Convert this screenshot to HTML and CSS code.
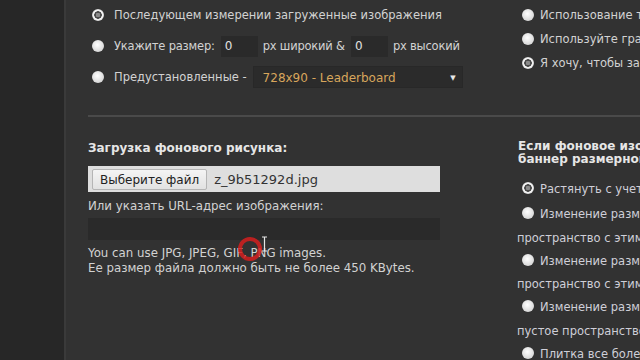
FILE: index.html
```html
<!DOCTYPE html>
<html lang="ru">
<head>
    <meta charset="UTF-8">
    <title>Фоновое изображение баннера</title>
    <link rel="stylesheet" href="styles.css">
</head>
<body>
<div class="page">
    <div class="side"></div>
    <div class="main">
        <div class="top">
            <div class="col-left">
                <div class="row"><span class="radio on"></span>Последующем измерении загруженные изображения</div>
                <div class="row"><span class="radio"></span>Укажите размер:<span class="num">0</span>px широкий &amp;<span class="num">0</span>px высокий</div>
                <div class="row"><span class="radio"></span>Предустановленные -<span class="select">728x90 - Leaderboard<span class="arrow">▼</span></span></div>
            </div>
            <div class="col-right">
                <div class="rrow"><span class="radio"></span>Использование текущего фонового изображения</div>
                <div class="rrow"><span class="radio"></span>Используйте градиентный фон</div>
                <div class="rrow"><span class="radio on"></span>Я хочу, чтобы загрузить фоновое изображение</div>
            </div>
        </div>
        <div class="sep"></div>
        <div class="bottom">
            <div class="col-left">
                <div class="title">Загрузка фонового рисунка:</div>
                <div class="file">
                    <span class="file-btn">Выберите файл</span>
                    <span class="file-name">z_9b51292d.jpg</span>
                </div>
                <div class="label">Или указать URL-адрес изображения:</div>
                <div class="url"></div>
                <div class="hint">
                    You can use JPG, JPEG, GIF, PNG images.<br>
                    Ее размер файла должно быть не более 450 KBytes.
                </div>
            </div>
            <div class="col-right">
                <div class="title tight">Если фоновое изображение не совпадает с<br>баннер размерном, то:</div>
                <div class="opts">
                    <div class="opt first"><span class="radio on"></span>Растянуть с учетом пропорций</div>
                    <div class="opt"><span class="radio"></span>Изменение размера с сохранением пропорций и заполнить<br>пространство с этим цветом</div>
                    <div class="opt"><span class="radio"></span>Изменение размера по ширине и заполнить<br>пространство с этим цветом</div>
                    <div class="opt"><span class="radio"></span>Изменение размера по высоте и оставить<br>пустое пространство прозрачным</div>
                    <div class="opt"><span class="radio"></span>Плитка все более баннер</div>
                </div>
            </div>
        </div>
    </div>
</div>
<div class="click">
    <svg width="40" height="40" viewBox="0 0 40 40">
        <circle cx="15" cy="15" r="10" fill="none" stroke="#d41e1e" stroke-width="4" opacity="0.85"/>
        <path d="M27 3h5M29.5 3v14M27 17h5" stroke="#e6e6e6" stroke-width="1.2" fill="none"/>
    </svg>
</div>
</body>
</html>
```

FILE: styles.css
```css
html, body {
    margin: 0;
    height: 100%;
    overflow: hidden;
}

body {
    background-color: #323232;
    font-family: "DejaVu Sans", Verdana, sans-serif;
    font-size: 11.5px;
    color: #d2d2d2;
    position: relative;
}

.page {
    display: flex;
    height: 360px;
    white-space: nowrap;
}

.side {
    width: 64px;
    flex: none;
    background-color: #272727;
    border-right: 2px solid #3a3a3a;
}

.main {
    flex: 1;
    min-width: 0;
    display: flex;
    flex-direction: column;
}

.top {
    height: 115px;
    flex: none;
    display: flex;
}

.bottom {
    display: flex;
}

.col-left {
    width: 429px;
    flex: none;
    padding-left: 22px;
}

.col-right {
    flex: 1;
}

.row {
    height: 30px;
    display: flex;
    align-items: center;
    margin-bottom: 1px;
}

.rrow {
    height: 24px;
    display: flex;
    align-items: center;
}

.top .col-right {
    padding-top: 3px;
}

.radio {
    width: 12px;
    height: 12px;
    border-radius: 50%;
    flex: none;
    background: radial-gradient(circle at 45% 40%, #ffffff, #d8d8d8 70%, #bdbdbd);
    margin: 0 10px 0 4px;
}

.radio.on {
    background: radial-gradient(circle, #8a8a8a 0 2px, #4a4a4a 2.5px 3.5px, #f2f2f2 4px 5px, #c9c9c9 6px);
}

.col-right .radio {
    margin: 0 6px 0 5px;
}

.row:nth-child(2) {
    letter-spacing: -0.2px;
}

.num {
    width: 37px;
    height: 21px;
    background-color: #2a2a2a;
    color: #e0e0e0;
    font-size: 12px;
    line-height: 21px;
    padding-left: 4px;
    box-sizing: border-box;
    margin: 0 5px 0 6px;
    letter-spacing: 0;
}

.select {
    position: relative;
    width: 210px;
    height: 22px;
    line-height: 22px;
    background-color: #2b2b2b;
    border: 1px solid #282828;
    color: #d8a65c;
    font-size: 12px;
    padding-left: 9px;
    box-sizing: border-box;
    margin-left: 6px;
}

.arrow {
    position: absolute;
    right: 6px;
    top: 0;
    font-size: 7px;
    color: #e8e8e8;
}

.sep {
    height: 2px;
    flex: none;
    background-color: #4a4a4a;
    margin-left: 22px;
}

.title {
    font-weight: bold;
    font-size: 12px;
    color: #e6e6e6;
    line-height: 14px;
    margin-top: 24px;
}

.title.tight {
    line-height: 13px;
    margin-top: 23px;
    margin-left: 1px;
}

.file {
    width: 352px;
    height: 26px;
    margin-top: 11px;
    background-color: #dedede;
    display: flex;
    align-items: center;
    box-sizing: border-box;
    padding-left: 4px;
}

.file-btn {
    height: 21px;
    line-height: 20px;
    padding: 0 7px;
    background: linear-gradient(#f4f4f4, #e2e2e2);
    border: 1px solid #b5b5b5;
    border-radius: 2px;
    box-sizing: border-box;
    color: #222;
    font-size: 12px;
}

.file-name {
    margin-left: 7px;
    color: #333;
    font-size: 13px;
}

.label {
    margin-top: 7px;
    line-height: 14px;
    font-size: 11.8px;
}

.url {
    width: 352px;
    height: 22px;
    margin-top: 5px;
    background-color: #2a2a2a;
}

.hint {
    margin-top: 6px;
    line-height: 14.5px;
    font-size: 11.8px;
}

.opts {
    margin-top: 12px;
}

.opt {
    line-height: 23.3px;
    color: #cfcfd8;
}

.opt.first {
    margin-bottom: 2px;
}

.opt .radio {
    display: inline-block;
    vertical-align: -1px;
}

.click {
    position: absolute;
    left: 235px;
    top: 234px;
}
```
